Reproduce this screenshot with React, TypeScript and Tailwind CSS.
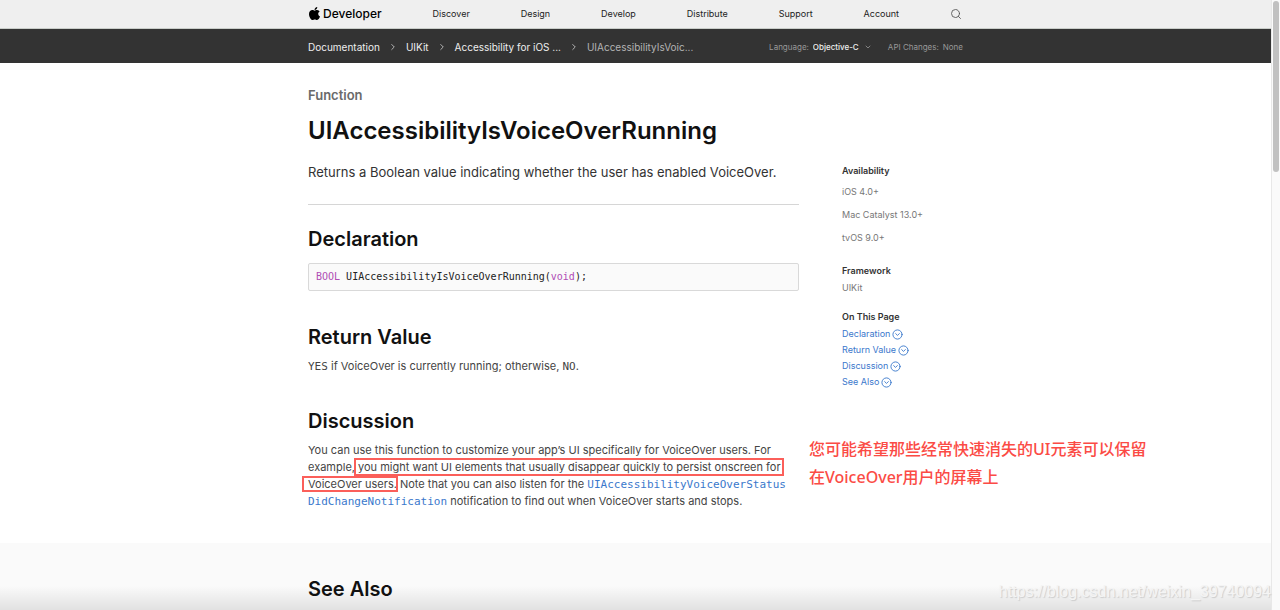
import { ChevronDown, ChevronRight, CircleChevronDown, Search } from "lucide-react";
import { FaApple } from "react-icons/fa";

const NAV_ITEMS = ["Discover", "Design", "Develop", "Distribute", "Support", "Account"];
const CRUMBS = ["Documentation", "UIKit", "Accessibility for iOS ..."];
const PLATFORMS = ["iOS 4.0+", "Mac Catalyst 13.0+", "tvOS 9.0+"];
const SECTIONS = [
  { label: "Declaration", href: "#declaration" },
  { label: "Return Value", href: "#return-value" },
  { label: "Discussion", href: "#discussion" },
  { label: "See Also", href: "#see-also" },
];

const CONTAINER = "mx-auto w-full max-w-[655px]";
const HEADING = "text-[20px] leading-6 font-semibold text-[#111]";
const MONO = "font-['DejaVu_Sans_Mono','Liberation_Mono',monospace]";

function GlobalNav() {
  return (
    <nav aria-label="Global" className="h-[29px] shrink-0 border-b border-[#c9cdc9] bg-[#efefef]">
      <div className={`${CONTAINER} flex h-full items-center justify-between text-[9px] text-[#222]`}>
        <a href="#" className="flex items-center gap-px text-[12px] font-medium text-black">
          <FaApple className="-ml-px mb-0.5 size-[15px]" />
          Developer
        </a>
        {NAV_ITEMS.map((item) => (
          <a key={item} href="#">
            {item}
          </a>
        ))}
        <button type="button" aria-label="Search" className="mr-px text-[#555]">
          <Search className="size-3" strokeWidth={1.75} />
        </button>
      </div>
    </nav>
  );
}

function Breadcrumbs() {
  return (
    <div className="h-[34px] shrink-0 bg-[#333] pt-0.5 text-[#eee]">
      <div className={`${CONTAINER} flex h-full items-center justify-between`}>
        <ol className="flex items-center text-[10px]">
          {CRUMBS.map((crumb) => (
            <li key={crumb} className="flex items-center">
              <a href="#">{crumb}</a>
              <ChevronRight className="mx-2 size-[10px] text-[#ccc]" />
            </li>
          ))}
          <li className="text-[#b4b4b4]">UIAccessibilityIsVoic...</li>
        </ol>
        <div className="flex items-center text-[8px] text-[#999]">
          <label htmlFor="language">Language:</label>
          <div className="relative ml-1">
            <select id="language" className="appearance-none bg-transparent pr-[13px] font-medium text-[#eee]">
              <option>Objective-C</option>
            </select>
            <ChevronDown className="pointer-events-none absolute top-1/2 right-0 size-2 -translate-y-1/2 text-[#aaa]" />
          </div>
          <span className="ml-4">API Changes:</span>
          <a href="#" className="ml-1">
            None
          </a>
        </div>
      </div>
    </div>
  );
}

function Sidebar() {
  return (
    <aside className="w-[121px] shrink-0 pt-[100px] text-[9px] leading-4 text-[#777]">
      <h3 className="font-semibold text-[#333]">Availability</h3>
      <ul className="mt-[5px] space-y-[7px]">
        {PLATFORMS.map((platform) => (
          <li key={platform}>{platform}</li>
        ))}
      </ul>
      <h3 className="mt-[17px] font-semibold text-[#333]">Framework</h3>
      <p className="mt-px">UIKit</p>
      <h3 className="mt-[13px] font-semibold text-[#333]">On This Page</h3>
      <ul className="mt-px text-[#3a78cc]">
        {SECTIONS.map(({ label, href }) => (
          <li key={href}>
            <a href={href} className="flex items-center gap-0.5">
              {label}
              <CircleChevronDown className="size-[11px]" />
            </a>
          </li>
        ))}
      </ul>
    </aside>
  );
}

function Article() {
  return (
    <article className="min-w-0 flex-1 pt-[22px] text-[11px] leading-[17px] text-[#444]">
      <p className="text-[13px] leading-5 font-semibold text-[#6a6a6a]">Function</p>
      <h1 className="mt-[10px] text-[24px] leading-8 font-semibold text-[#111]">
        UIAccessibilityIsVoiceOverRunning
      </h1>
      <p className="mt-[15px] border-b border-[#d6d6d6] pb-[22px] text-[13px] leading-5 text-[#333]">
        Returns a Boolean value indicating whether the user has enabled VoiceOver.
      </p>

      <h2 id="declaration" className={`${HEADING} mt-[22px]`}>
        Declaration
      </h2>
      <pre className={`${MONO} mt-3 rounded-xs border border-[#d9d9d9] bg-[#fafafa] px-[7px] py-[5px] text-[10px] leading-4 text-[#222]`}>
        <span className="text-[#b04db5]">BOOL</span> UIAccessibilityIsVoiceOverRunning(
        <span className="text-[#b04db5]">void</span>);
      </pre>

      <h2 id="return-value" className={`${HEADING} mt-[34px]`}>
        Return Value
      </h2>
      <p className="mt-[9px]">
        <code className={MONO}>YES</code> if VoiceOver is currently running; otherwise,{" "}
        <code className={MONO}>NO</code>.
      </p>

      <h2 id="discussion" className={`${HEADING} mt-[34px]`}>
        Discussion
      </h2>
      <div className="relative mt-[9px]">
        <p className="whitespace-nowrap">
          You can use this function to customize your app’s UI specifically for VoiceOver users. For
          <br />
          example, you might want UI elements that usually disappear quickly to persist onscreen for
          <br />
          VoiceOver users. Note that you can also listen for the{" "}
          <a href="#" className={`${MONO} text-[#3a78cc]`}>
            UIAccessibilityVoiceOverStatus
            <br />
            DidChangeNotification
          </a>{" "}
          notification to find out when VoiceOver starts and stops.
        </p>
        {/* marked passage and its translation */}
        <div className="absolute top-4 left-[46px] h-[18px] w-[430px] border-2 border-[#fb5f5a]" />
        <div className="absolute top-[34px] -left-[6px] h-4 w-[96px] border-2 border-[#fb5f5a]" />
        <p
          lang="zh"
          className="absolute -top-[7px] left-[501px] whitespace-nowrap font-['Noto_Sans','Noto_Sans_CJK_SC',sans-serif] text-[16px] leading-7 font-medium text-[#fb4b45]"
        >
          您可能希望那些经常快速消失的UI元素可以保留
          <br />
          在VoiceOver用户的屏幕上
        </p>
      </div>
    </article>
  );
}

export default function App() {
  return (
    <div className="flex h-screen overflow-hidden bg-white font-['Inter',sans-serif]">
      <div className="relative flex min-w-0 flex-1 flex-col">
        <GlobalNav />
        <Breadcrumbs />
        <main className="flex flex-1 flex-col">
          <div className={`${CONTAINER} flex gap-[43px] pb-[33px]`}>
            <Article />
            <Sidebar />
          </div>
          <section className="flex-1 bg-[#fafafa]">
            <div className={`${CONTAINER} pt-[34px]`}>
              <h2 id="see-also" className={HEADING}>
                See Also
              </h2>
            </div>
          </section>
        </main>
        <div className="pointer-events-none absolute inset-x-0 bottom-0 h-6 bg-linear-to-b from-transparent to-black/10" />
        <p className="absolute right-0 bottom-[9px] font-['Liberation_Sans',sans-serif] text-[16px] leading-[18px] text-[#f4f4f4] [text-shadow:1px_1px_1px_#ccc]">
          https://blog.csdn.net/weixin_39740094
        </p>
      </div>
      <div className="w-[9px] shrink-0 border-l border-[#e8e8e8] bg-[#fafafa] pt-px pl-px">
        <div className="h-[171px] w-[6px] rounded-full bg-[#c1c1c1]" />
      </div>
    </div>
  );
}
